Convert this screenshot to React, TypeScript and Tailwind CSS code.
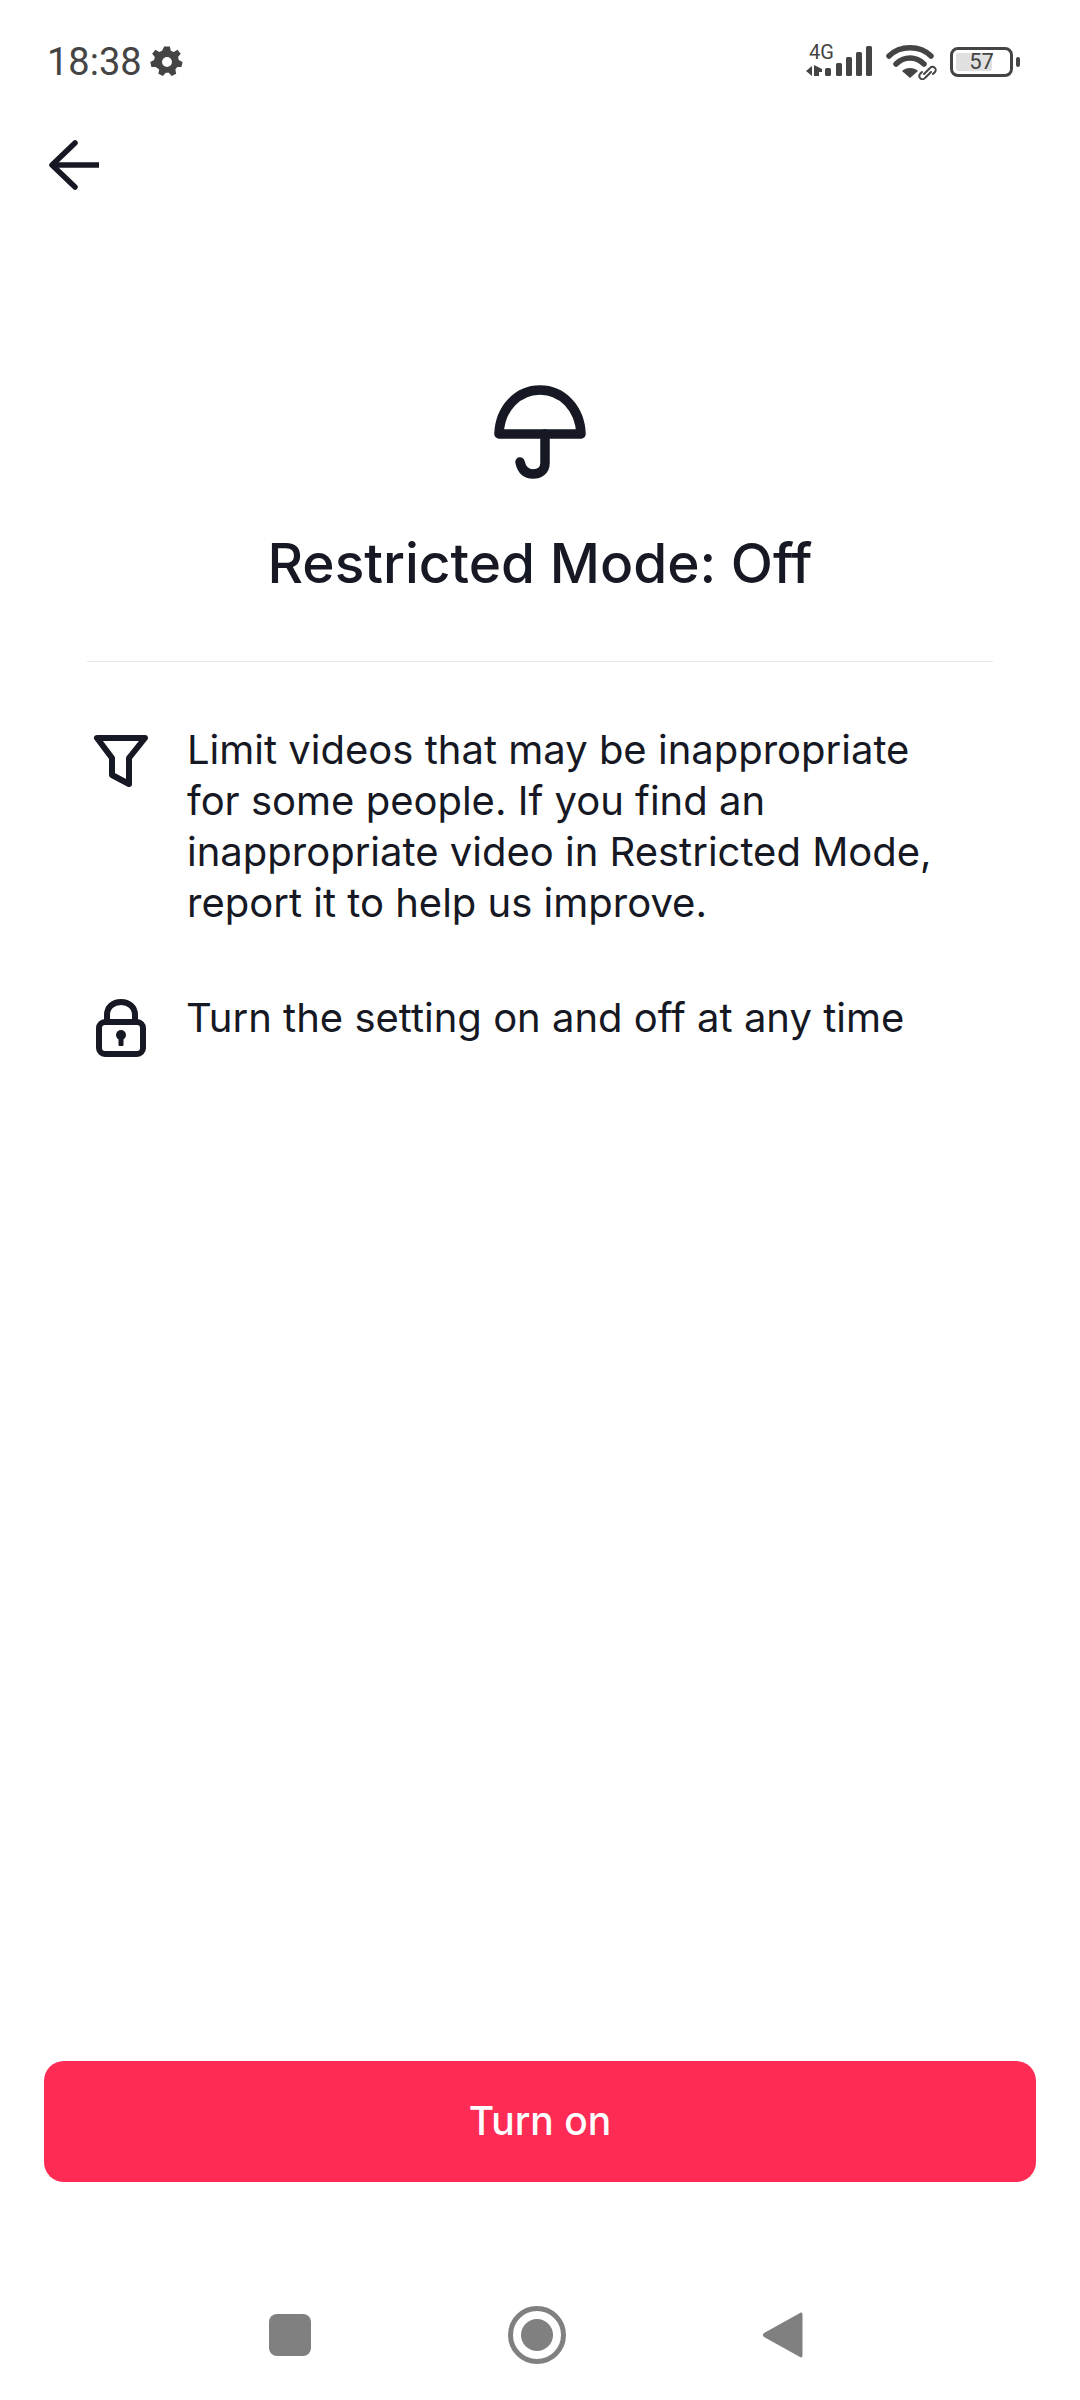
import React from 'react';

const GearIcon = () => (
  <svg width="34" height="34" viewBox="0 0 24 24" className="ml-[8px]">
    <path
      fill="#444444"
      fillRule="evenodd"
      d="M10 1h4l.7 3 2 .9 2.7-1.6 2.3 2.800-1.900 2.400.5 2.100 2.700 1.400-.8 3.500-3 .1-1.300 1.700.6 3-3.200 1.500-2-2.300h-2.200l-2 2.300-3.200-1.500.6-3L4 15.600l-3-.1-.8-3.500 2.700-1.400.5-2.100L1.500 6.100l2.300-2.800L6.500 4.900l2-.9L10 1Zm2 7.500a3.500 3.500 0 1 0 0 7 3.500 3.500 0 0 0 0-7Z"
    />
  </svg>
);

const SignalIcon = () => (
  <div className="relative w-[68px] h-[36px]">
    <span className="absolute left-[3px] -top-[2px] text-[20px] leading-[20px] text-[#444444]">4G</span>
    <svg width="68" height="36" viewBox="0 0 68 36">
      <path fill="#444444" d="M0 27l6-5v10l-6-5Zm8-6l8 4v3h-3v4H8V21Z" />
      <rect x="19" y="24" width="6" height="8" rx="1.500" fill="#444444" />
      <rect x="30" y="19" width="6" height="13" rx="1.500" fill="#444444" />
      <rect x="40" y="13" width="6" height="19" rx="1.500" fill="#444444" />
      <rect x="50" y="8" width="6" height="24" rx="1.500" fill="#444444" />
      <rect x="60" y="2" width="6" height="30" rx="1.500" fill="#444444" />
    </svg>
  </div>
);

const WifiIcon = () => (
  <svg width="52" height="36" viewBox="0 0 52 36" fill="none">
    <path d="M3 12C14 1 34 1 45 12" stroke="#444444" strokeWidth="5.500" strokeLinecap="round" />
    <path d="M10 20C18 12 30 12 38 20" stroke="#444444" strokeWidth="5.500" strokeLinecap="round" />
    <path d="M16 27c4-4 12-4 16 0l-8 7-8-7Z" fill="#444444" />
    <path
      d="M38 30l6-6a3 3 0 0 1 5 4l-2 2M45 28l-6 6a3 3 0 0 1-5-4l2-2"
      stroke="#444444"
      strokeWidth="2"
      strokeLinecap="round"
    />
  </svg>
);

const Battery = () => (
  <div className="flex items-center gap-[3px]">
    <div className="relative w-[63px] h-[30px] rounded-[8px] border-[3px] border-[#444444] p-[3px]">
      <div className="w-[36px] h-full rounded-[2px] bg-[#e0e0e0]" />
      <span className="absolute inset-0 flex items-center justify-center text-[22px] leading-none text-[#444444]">
        57
      </span>
    </div>
    <div className="w-[4px] h-[10px] rounded-full bg-[#444444]" />
  </div>
);

const ArrowIcon = () => (
  <svg width="54" height="50" viewBox="0 0 54 50" fill="none" stroke="#161823" strokeWidth="5.500" strokeLinecap="round" strokeLinejoin="round">
    <path d="M27 3L4 25l23 22" />
    <path d="M4 25h47" strokeLinecap="butt" />
  </svg>
);

const UmbrellaIcon = () => (
  <svg width="92" height="94" viewBox="0 0 92 94" fill="none" stroke="#161823" strokeWidth="9.500" strokeLinecap="round" strokeLinejoin="round">
    <path d="M5 49C6 23 24 5 46 5s40 18 41 44H5Z" />
    <path d="M51 49v29c0 8-6 11-12 11s-11-3-13-12" />
  </svg>
);

const FilterIcon = () => (
  <svg width="56" height="54" viewBox="0 0 56 54" fill="none" stroke="#161823" strokeWidth="6" strokeLinecap="round" strokeLinejoin="round">
    <path d="M4 4h48L36 24v26l-17-9V24L4 4Z" />
  </svg>
);

const LockIcon = () => (
  <svg width="50" height="58" viewBox="0 0 50 58" fill="none">
    <path d="M11 22V16C11 8 17 3 25 3s14 5 14 13v6" stroke="#161823" strokeWidth="6" />
    <rect x="3" y="23" width="44" height="32" rx="6" stroke="#161823" strokeWidth="6" />
    <circle cx="25" cy="36" r="5" fill="#161823" />
    <rect x="22.500" y="37" width="5" height="10" rx="1" fill="#161823" />
  </svg>
);

export default function App() {
  return (
    <div className="w-[1080px] h-[2400px] bg-white flex flex-col font-['Inter',sans-serif] text-[#161823]">
      {/* status bar */}
      <div className="h-[124px] pl-[47px] pr-[60px] flex items-center justify-between font-['Roboto',sans-serif] text-[#444444]">
        <div className="flex items-center">
          <span className="text-[38px] leading-none font-[450]">18:38</span>
          <GearIcon />
        </div>
        <div className="flex items-center gap-[12px]">
          <SignalIcon />
          <WifiIcon />
          <Battery />
        </div>
      </div>

      <div className="h-[82px] pl-[48px] flex items-center">
        <ArrowIcon />
      </div>

      <div className="mt-[179px] flex flex-col items-center">
        <UmbrellaIcon />
        <h1 className="mt-[50px] text-[55px] leading-[68px] font-medium">Restricted Mode: Off</h1>
      </div>

      <div className="mt-[64px] mx-[87px] h-px bg-[#e8e8e8]" />

      <div className="mt-[72px] pl-[93px] pr-[100px] flex flex-col gap-[71px]">
        <div className="flex items-start gap-[38px]">
          <FilterIcon />
          <p className="-mt-[10px] text-[40px] leading-[51px]">
            Limit videos that may be inappropriate
            <br />
            for some people. If you find an
            <br />
            inappropriate video in Restricted Mode,
            <br />
            report it to help us improve.
          </p>
        </div>
        <div className="flex items-start gap-[40px] pl-[3px]">
          <LockIcon />
          <p className="-mt-[7px] text-[40px] leading-[51px]">Turn the setting on and off at any time</p>
        </div>
      </div>

      <div className="mt-auto mx-[44px] h-[121px] rounded-[20px] bg-[#fe2c55] flex items-center justify-center">
        <span className="text-[39px] font-medium text-white">Turn on</span>
      </div>

      {/* android nav */}
      <div className="mt-[124px] mb-[36px] h-[58px] flex items-center pl-[269px]">
        <div className="w-[42px] h-[42px] rounded-[8px] bg-[#808080]" />
        <div className="ml-[197px] w-[58px] h-[58px] rounded-full border-[5px] border-[#808080] flex items-center justify-center">
          <div className="w-[32px] h-[32px] rounded-full bg-[#808080]" />
        </div>
        <svg width="42" height="48" viewBox="0 0 42 48" className="ml-[196px]">
          <path d="M38 2c1.500-1 2.500 0 2.500 1.500v41c0 1.500-1 2.500-2.500 1.500L2 26c-1.500-1-1.500-3 0-4L38 2Z" fill="#808080" />
        </svg>
      </div>
    </div>
  );
}
